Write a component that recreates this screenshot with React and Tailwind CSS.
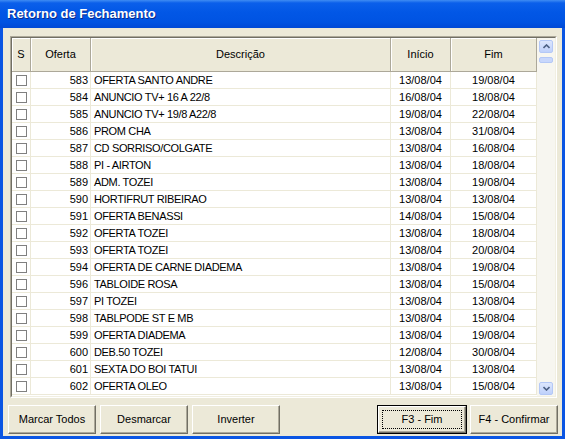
import React from 'react'

const rows = [
  ['583', 'OFERTA SANTO ANDRE', '13/08/04', '19/08/04'],
  ['584', 'ANUNCIO TV+ 16 A 22/8', '16/08/04', '18/08/04'],
  ['585', 'ANUNCIO TV+ 19/8 A22/8', '19/08/04', '22/08/04'],
  ['586', 'PROM CHA', '13/08/04', '31/08/04'],
  ['587', 'CD SORRISO/COLGATE', '13/08/04', '16/08/04'],
  ['588', 'PI - AIRTON', '13/08/04', '18/08/04'],
  ['589', 'ADM. TOZEI', '13/08/04', '19/08/04'],
  ['590', 'HORTIFRUT RIBEIRAO', '13/08/04', '13/08/04'],
  ['591', 'OFERTA BENASSI', '14/08/04', '15/08/04'],
  ['592', 'OFERTA TOZEI', '13/08/04', '18/08/04'],
  ['593', 'OFERTA TOZEI', '13/08/04', '20/08/04'],
  ['594', 'OFERTA DE CARNE DIADEMA', '13/08/04', '19/08/04'],
  ['596', 'TABLOIDE ROSA', '13/08/04', '15/08/04'],
  ['597', 'PI TOZEI', '13/08/04', '13/08/04'],
  ['598', 'TABLPODE ST E MB', '13/08/04', '15/08/04'],
  ['599', 'OFERTA DIADEMA', '13/08/04', '19/08/04'],
  ['600', 'DEB.50 TOZEI', '12/08/04', '30/08/04'],
  ['601', 'SEXTA DO BOI TATUI', '13/08/04', '13/08/04'],
  ['602', 'OFERTA OLEO', '13/08/04', '15/08/04']
]

// cabeçalho do grid
const HeadCell = ({ w, children }) => (
  <div className={`${w} h-full flex items-center justify-center border-r border-b border-[#ACA899] shadow-[inset_1px_1px_0_#ffffff]`}>
    {children}
  </div>
)

const Button = ({ children, isDefault }) => {
  if (isDefault) {
    return (
      <div className="w-[90px] h-[29px] border border-black">
        <div className="h-full border-t border-l border-white border-b border-r border-b-[#716F64] border-r-[#716F64] shadow-[inset_-1px_-1px_0_#ACA899] flex p-[3px]">
          <div className="flex-1 border border-dotted border-black flex items-center justify-center">
            {children}
          </div>
        </div>
      </div>
    )
  }
  return (
    <div className="w-[88px] h-[29px] border-t border-l border-white border-b border-r border-b-[#716F64] border-r-[#716F64] shadow-[inset_-1px_-1px_0_#ACA899] flex items-center justify-center">
      {children}
    </div>
  )
}

const ScrollBtn = ({ down }) => (
  <div className="w-[14px] h-[13px] mx-auto rounded-[2px] border border-[#B4C8F6] bg-[linear-gradient(to_bottom,#DCE6FD,#BFD1FB)] flex items-center justify-center">
    <svg width="7" height="5" viewBox="0 0 7 5">
      <path d={down ? 'M0.5 1 L3.5 4 L6.5 1' : 'M0.5 4 L3.5 1 L6.5 4'} stroke="#4D6185" strokeWidth="1.6" fill="none" />
    </svg>
  </div>
)

export default function App() {
  return (
    <div className="w-[565px] h-[439px] flex flex-col bg-[#0A55E3] font-['Liberation_Sans',Arial,sans-serif] text-[11px] text-black overflow-hidden">
      {/* Title bar */}
      <div className="h-[28px] shrink-0 flex items-center pl-[7px] bg-[linear-gradient(to_bottom,#3F8CF3_0px,#0B5FEA_3px,#0257E6_12px,#0053E2_22px,#0049D6_28px)]">
        <span className="text-white font-bold text-[13px] [text-shadow:1px_1px_0_#0A2A8A]">Retorno de Fechamento</span>
      </div>

      {/* Body */}
      <div className="flex-1 mx-[3px] mb-[3px] bg-[#ECE9D8] flex flex-col pt-[8px]">
        {/* Grid */}
        <div className="ml-[7px] mr-[5px] h-[362px] border-t border-l border-[#ACA899] border-b border-r border-b-white border-r-white">
          <div className="h-full border-t border-l border-[#716F64] border-b border-r border-b-[#F1EFE2] border-r-[#F1EFE2] flex bg-white">
            <div className="w-[525px] flex flex-col">
              <div className="h-[34px] shrink-0 flex bg-[#ECE9D8]">
                <HeadCell w="w-[19px]">S</HeadCell>
                <HeadCell w="w-[60px]">Oferta</HeadCell>
                <HeadCell w="w-[300px]">Descrição</HeadCell>
                <HeadCell w="w-[60px]">Início</HeadCell>
                <HeadCell w="w-[86px]">Fim</HeadCell>
              </div>
              {rows.map(([id, desc, ini, fim]) => (
                <div key={id} className="h-[17px] shrink-0 flex">
                  <div className="w-[19px] border-r border-b border-[#ECE9D8] flex items-center justify-center">
                    <div className="w-[11px] h-[11px] border border-[#808080] bg-white" />
                  </div>
                  <div className="w-[60px] border-r border-b border-[#ECE9D8] flex items-center justify-end pr-[2px]">{id}</div>
                  <div className="w-[300px] border-r border-b border-[#ECE9D8] flex items-center pl-[3px] tracking-[-0.35px] whitespace-pre overflow-hidden">{desc}</div>
                  <div className="w-[60px] border-r border-b border-[#ECE9D8] flex items-center justify-center">{ini}</div>
                  <div className="w-[86px] border-r border-b border-[#ECE9D8] flex items-center justify-center">{fim}</div>
                </div>
              ))}
            </div>
            {/* Scrollbar */}
            <div className="flex-1 bg-[#F7F6F0] flex flex-col pt-[2px] pb-[1px]">
              <ScrollBtn />
              <div className="w-[14px] h-[6px] mx-auto mt-[4px] rounded-[2px] border border-[#B4C8F6] bg-[#C8D7FC]" />
              <div className="flex-1" />
              <ScrollBtn down />
            </div>
          </div>
        </div>

        {/* Buttons */}
        <div className="mt-[7px] ml-[5px] mr-[4px] flex">
          <div className="flex gap-[4px]">
            <Button>Marcar Todos</Button>
            <Button>Desmarcar</Button>
            <Button>Inverter</Button>
          </div>
          <div className="ml-auto flex gap-[3px]">
            <Button isDefault>F3 - Fim</Button>
            <Button>F4 - Confirmar</Button>
          </div>
        </div>
      </div>
    </div>
  )
}
